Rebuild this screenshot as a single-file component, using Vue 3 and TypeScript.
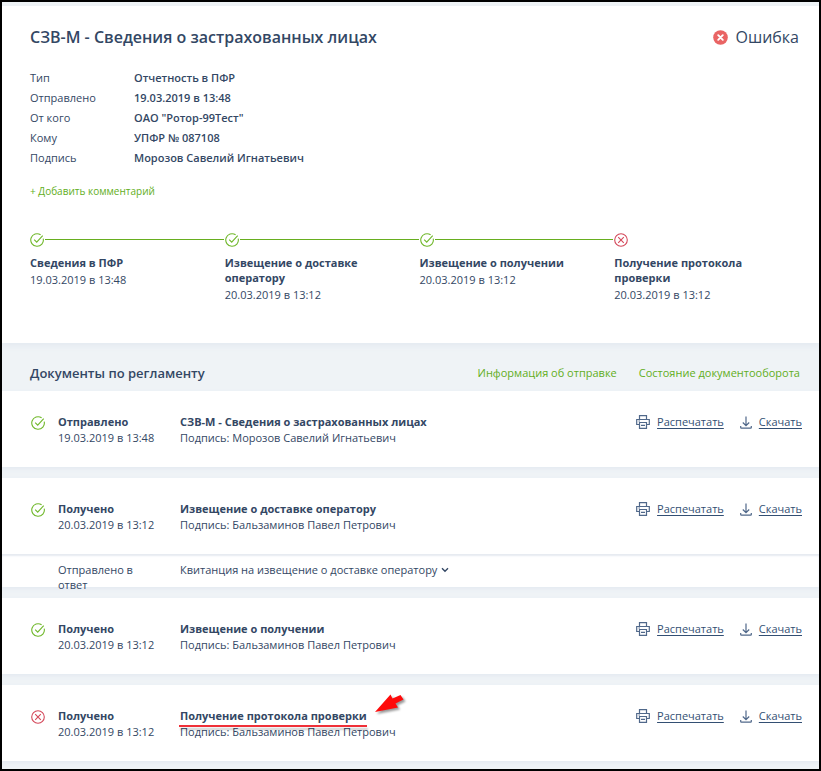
<script setup lang="ts">
type State = 'ok' | 'error'

interface Detail { label: string; value: string }
interface Step { title: string; date: string; state: State }
interface Doc {
  status: string
  date: string
  title: string
  signer: string
  state: State
  reply?: { label: string; title: string }
  marked?: boolean
}

const details: Detail[] = [
  { label: 'Тип', value: 'Отчетность в ПФР' },
  { label: 'Отправлено', value: '19.03.2019 в 13:48' },
  { label: 'От кого', value: 'ОАО "Ротор-99Тест"' },
  { label: 'Кому', value: 'УПФР № 087108' },
  { label: 'Подпись', value: 'Морозов Савелий Игнатьевич' },
]

const steps: Step[] = [
  { title: 'Сведения в ПФР', date: '19.03.2019 в 13:48', state: 'ok' },
  { title: 'Извещение о доставке оператору', date: '20.03.2019 в 13:12', state: 'ok' },
  { title: 'Извещение о получении', date: '20.03.2019 в 13:12', state: 'ok' },
  { title: 'Получение протокола проверки', date: '20.03.2019 в 13:12', state: 'error' },
]

const docs: Doc[] = [
  { status: 'Отправлено', date: '19.03.2019 в 13:48', title: 'СЗВ-М - Сведения о застрахованных лицах', signer: 'Морозов Савелий Игнатьевич', state: 'ok' },
  { status: 'Получено', date: '20.03.2019 в 13:12', title: 'Извещение о доставке оператору', signer: 'Бальзаминов Павел Петрович', state: 'ok', reply: { label: 'Отправлено в ответ', title: 'Квитанция на извещение о доставке оператору' } },
  { status: 'Получено', date: '20.03.2019 в 13:12', title: 'Извещение о получении', signer: 'Бальзаминов Павел Петрович', state: 'ok' },
  { status: 'Получено', date: '20.03.2019 в 13:12', title: 'Получение протокола проверки', signer: 'Бальзаминов Павел Петрович', state: 'error', marked: true },
]
</script>

<template>
  <main class="page">
    <section class="summary">
      <header class="head">
        <h1 class="title">СЗВ-М - Сведения о застрахованных лицах</h1>
        <div class="status">
          <svg class="status-icon" viewBox="0 0 15 15" aria-hidden="true">
            <circle cx="7.5" cy="7.5" r="7.3" fill="#e96464" />
            <path d="M5.2 5.2l4.6 4.6M9.8 5.2l-4.6 4.6" stroke="#fff" stroke-width="1.9" stroke-linecap="round" />
          </svg>
          <span>Ошибка</span>
        </div>
      </header>

      <dl class="details">
        <template v-for="d in details" :key="d.label">
          <dt>{{ d.label }}</dt>
          <dd>{{ d.value }}</dd>
        </template>
      </dl>

      <button type="button" class="comment">+ Добавить комментарий</button>

      <ol class="steps">
        <li v-for="s in steps" :key="s.title" class="step">
          <div class="track">
            <svg class="mark" :class="s.state" viewBox="0 0 14 14" aria-hidden="true">
              <template v-if="s.state === 'ok'">
                <path d="M13.2 5.6A6.3 6.3 0 1 1 10.6 1.8" />
                <path d="M4.2 6.7l2.5 2.5 6-6.6" />
              </template>
              <template v-else>
                <circle cx="7" cy="7" r="6.3" />
                <path d="M4.2 4.2l5.6 5.6M9.8 4.2L4.2 9.8" />
              </template>
            </svg>
          </div>
          <h3 class="step-title">{{ s.title }}</h3>
          <p class="step-date">{{ s.date }}</p>
        </li>
      </ol>
    </section>

    <header class="docs-head">
      <h2 class="docs-title">Документы по регламенту</h2>
      <nav class="docs-nav">
        <a href="#info">Информация об отправке</a>
        <a href="#state">Состояние документооборота</a>
      </nav>
    </header>

    <div class="docs">
      <article v-for="doc in docs" :key="doc.title" class="doc">
        <div class="doc-row">
          <svg class="mark" :class="doc.state" viewBox="0 0 14 14" aria-hidden="true">
            <template v-if="doc.state === 'ok'">
              <path d="M13.2 5.6A6.3 6.3 0 1 1 10.6 1.8" />
              <path d="M4.2 6.7l2.5 2.5 6-6.6" />
            </template>
            <template v-else>
              <circle cx="7" cy="7" r="6.3" />
              <path d="M4.2 4.2l5.6 5.6M9.8 4.2L4.2 9.8" />
            </template>
          </svg>
          <div class="when">
            <strong>{{ doc.status }}</strong>
            <p>{{ doc.date }}</p>
          </div>
          <div class="what">
            <strong class="doc-title">{{ doc.title }}<svg v-if="doc.marked" class="arrow" viewBox="0 0 34 28" aria-hidden="true">
              <path d="M3 22L18.500 4.500L20.500 8.500L28.500 5L31.500 9.500L23.500 13.500L26 17.500Z" fill="#fe0b0b" />
            </svg><span v-if="doc.marked" class="underline"></span></strong>
            <p>Подпись: {{ doc.signer }}</p>
          </div>
          <div class="actions">
            <a href="#print" class="action print">
              <svg class="print-icon" viewBox="0 0 14 14" aria-hidden="true">
                <path d="M3.500 4.500V.7h7v3.800M3.500 9.500H.7v-5h12.600v5h-2.800M3.500 7.500h7v5.800h-7zM2.500 6h1.500M5 10.400h4" />
              </svg>
              <span>Распечатать</span>
            </a>
            <a href="#download" class="action download">
              <svg class="download-icon" viewBox="0 0 12 13" aria-hidden="true">
                <path d="M6 .5v9M2.800 6.500L6 9.700l3.200-3.200M.7 10v1.500q0 .7.7.7h9.200q.7 0 .7-.7V10" />
              </svg>
              <span>Скачать</span>
            </a>
          </div>
        </div>
        <div v-if="doc.reply" class="reply">
          <p class="reply-label">{{ doc.reply.label }}</p>
          <button type="button" class="reply-toggle">
            <span>{{ doc.reply.title }}</span>
            <svg class="chevron" viewBox="0 0 8 6" aria-hidden="true"><path d="M1 1.200l3 3 3-3" /></svg>
          </button>
        </div>
      </article>
    </div>
  </main>
</template>

<style>
body {
  margin: 0;
}
</style>

<style scoped>
.page {
  box-sizing: border-box;
  min-height: 100vh;
  overflow: clip;
  border: 2px solid #000;
  padding-top: 4px;
  background: #eff3f6;
  color: #334764;
  font: 11px/16px "Open Sans", "Noto Sans", sans-serif;
}
h1, h2, h3, p, dl, dd, ol {
  margin: 0;
  padding: 0;
}
button {
  border: 0;
  padding: 0;
  background: none;
  color: inherit;
  font: inherit;
  cursor: pointer;
}
svg {
  display: block;
  flex: none;
  fill: none;
}
strong {
  display: block;
  font-weight: 700;
}
.summary {
  padding: 18px 10px 40px 28px;
  background: #fff;
  box-shadow: 0 3px 6px #e4eaf1;
}
.head {
  display: flex;
  align-items: center;
  justify-content: space-between;
  padding-right: 10px;
}
.title {
  font-size: 16px;
  line-height: 26px;
  font-weight: 600;
}
.status {
  display: flex;
  align-items: center;
  gap: 7px;
  font-size: 16px;
  line-height: 26px;
}
.status-icon {
  width: 15px;
  height: 15px;
}
.details {
  display: grid;
  grid-template-columns: 104px 1fr;
  margin-top: 18px;
  line-height: 20px;
}
dd {
  font-weight: 600;
}
.comment {
  display: block;
  margin-top: 15px;
  color: #62ae1b;
  font-size: 10px;
  line-height: 16px;
}
.steps {
  display: grid;
  grid-template-columns: repeat(4, 1fr);
  margin-top: 34px;
  list-style: none;
}
.track {
  display: flex;
  align-items: center;
  gap: 1px;
  height: 14px;
  margin-bottom: 8px;
}
.step:not(:last-child) .track::after {
  content: "";
  flex: 1;
  height: 1px;
  margin: 0 1px 1px 0;
  background: #67ae1f;
}
.mark {
  width: 14px;
  height: 14px;
  stroke-width: 1.1;
}
.ok {
  stroke: #70b82b;
}
.error {
  stroke: #d4485a;
}
.step-title {
  padding-right: 40px;
  font-size: 11px;
  line-height: 15px;
  font-weight: 700;
}
.step-date {
  margin-top: 2px;
}
.docs-head {
  display: flex;
  align-items: center;
  justify-content: space-between;
  padding: 20px 19px 8px 28px;
}
.docs-title {
  font-size: 13px;
  line-height: 20px;
  font-weight: 600;
}
.docs-nav {
  display: flex;
  gap: 22px;
}
.docs-nav a {
  color: #62ae1b;
  text-decoration: none;
}
.docs {
  display: grid;
  gap: 11px;
}
.doc {
  background: #fff;
  box-shadow: 0 2px 4px #e4eaf1;
}
.doc-row {
  display: flex;
  align-items: flex-start;
  padding: 23px 17px 21px 29px;
}
.doc-row > .mark {
  margin-top: 2px;
}
.when {
  width: 110px;
  margin-left: 13px;
}
.what {
  flex: 1;
  margin-left: 12px;
}
.doc-title {
  position: relative;
  width: fit-content;
}
.arrow {
  position: absolute;
  left: calc(100% + 5px);
  bottom: 6px;
  width: 34px;
  height: 28px;
  filter: drop-shadow(2px 2px 1px #0006);
}
.underline {
  position: absolute;
  left: -1px;
  right: 0;
  bottom: -3px;
  height: 2px;
  background: #f03038;
  box-shadow: 1px 3px 2px #0003;
}
.actions {
  display: flex;
  gap: 16px;
}
.action {
  display: flex;
  align-items: center;
  color: #334f73;
  text-decoration: none;
}
.action span {
  text-decoration: underline;
  text-underline-offset: 2px;
}
.action svg {
  stroke: #50688a;
  stroke-width: 1.2;
}
.print {
  gap: 7px;
}
.download {
  gap: 7px;
}
.print-icon {
  width: 14px;
  height: 14px;
}
.download-icon {
  width: 12px;
  height: 13px;
}
.reply {
  display: flex;
  align-items: flex-start;
  height: 25px;
  padding: 8px 17px 0 56px;
  line-height: 15px;
  box-shadow: inset 0 2px 2px #e6eaf1;
}
.reply-label {
  width: 110px;
  padding-right: 12px;
  box-sizing: border-box;
}
.reply-toggle {
  display: flex;
  align-items: center;
  gap: 4px;
  margin-left: 12px;
}
.chevron {
  width: 8px;
  height: 6px;
  stroke: #334764;
  stroke-width: 1.4;
}
</style>
